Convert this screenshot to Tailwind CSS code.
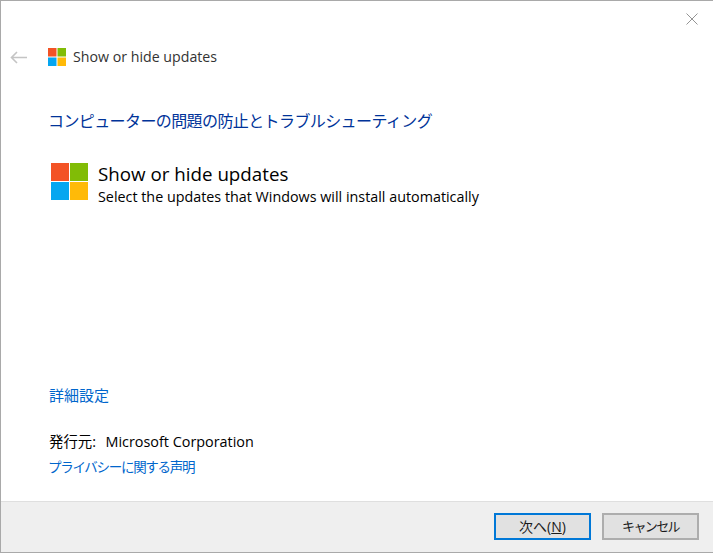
<!DOCTYPE html>
<html lang="ja" class="h-full">
<head>
    <meta charset="UTF-8">
    <title>Show or hide updates</title>
    <script src="https://cdn.jsdelivr.net/npm/@tailwindcss/browser@4"></script>
</head>
<body class="h-full overflow-hidden bg-white">
    <div class="h-[553px] w-[713px] flex flex-col border-t border-l border-b border-[#a9a9a9] font-['Open_Sans','Noto_Sans_CJK_JP',sans-serif] text-[#1a1a1a]">
        <!-- title bar -->
        <div class="h-[39px] flex justify-end">
            <svg class="mt-[12px] mr-[15px] w-[12px] h-[12px]" viewBox="0 0 12 12" fill="none" stroke="#949494" stroke-width="1"><path d="M0.5 0.5 11.5 11.5M11.5 0.5 0.5 11.5"/></svg>
        </div>
        <div class="h-[34px] flex items-center">
            <svg class="ml-[9px] w-[17px] h-[13px]" viewBox="0 0 17 13" fill="none" stroke="#c4c4c4" stroke-width="1.6"><path d="M17 6.5H1.5M7 1 1.5 6.5 7 12"/></svg>
            <svg class="ml-[21px] w-[18px] h-[18px]" viewBox="0 0 18 18">
                <rect width="8.5" height="8.5" fill="#f35325"/><rect x="9.5" width="8.5" height="8.5" fill="#81bc06"/>
                <rect y="9.5" width="8.5" height="8.5" fill="#05a6f0"/><rect x="9.5" y="9.5" width="8.5" height="8.5" fill="#ffba08"/>
            </svg>
            <span class="ml-[7px] text-[14.2px] text-[#333]">Show or hide updates</span>
        </div>
        <div class="ml-[47px] mt-[34px] text-[16px] leading-[26px] tracking-[-0.6px] text-[#003399]">コンピューターの問題の防止とトラブルシューティング</div>
        <!-- package -->
        <div class="ml-[50px] mt-[27px] flex items-start">
            <svg class="mt-[2px] w-[37px] h-[37px] shrink-0" viewBox="0 0 37 37">
                <rect width="18" height="18" fill="#f35325"/><rect x="19" width="18" height="18" fill="#81bc06"/>
                <rect y="19" width="18" height="18" fill="#05a6f0"/><rect x="19" y="19" width="18" height="18" fill="#ffba08"/>
            </svg>
            <div class="ml-[10px]">
                <div class="text-[18.75px] leading-[26px] text-black">Show or hide updates</div>
                <div class="text-[14.33px] leading-[19px] text-black">Select the updates that Windows will install automatically</div>
            </div>
        </div>
        <div class="flex-1"></div>
        <div class="ml-[48px] text-[15px] leading-[20px] text-[#0066cc]">詳細設定</div>
        <div class="ml-[48px] mt-[27px] text-[14.4px] leading-[20px] text-black">発行元:&nbsp; <span class="ml-[2px]">Microsoft Corporation</span></div>
        <div class="ml-[47px] mt-[5px] text-[13.5px] leading-[20px] tracking-[-1.3px] text-[#0066cc]">プライバシーに関する声明</div>
        <!-- footer -->
        <div class="mt-[24px] h-[51px] bg-[#efefef] border-t border-[#dfdfdf] flex justify-end gap-[11px] pt-[11px] pr-[14px]">
            <button class="w-[97px] h-[27px] bg-[#e1e1e1] border-2 border-[#0078d7] text-[14px] text-[#1a1a1a]">次へ(<span class="underline">N</span>)</button>
            <button class="w-[97px] h-[27px] bg-[#e1e1e1] border-2 border-[#adadad] text-[13px] tracking-[-1.6px] text-[#1a1a1a]">キャンセル</button>
        </div>
    </div>
</body>
</html>
